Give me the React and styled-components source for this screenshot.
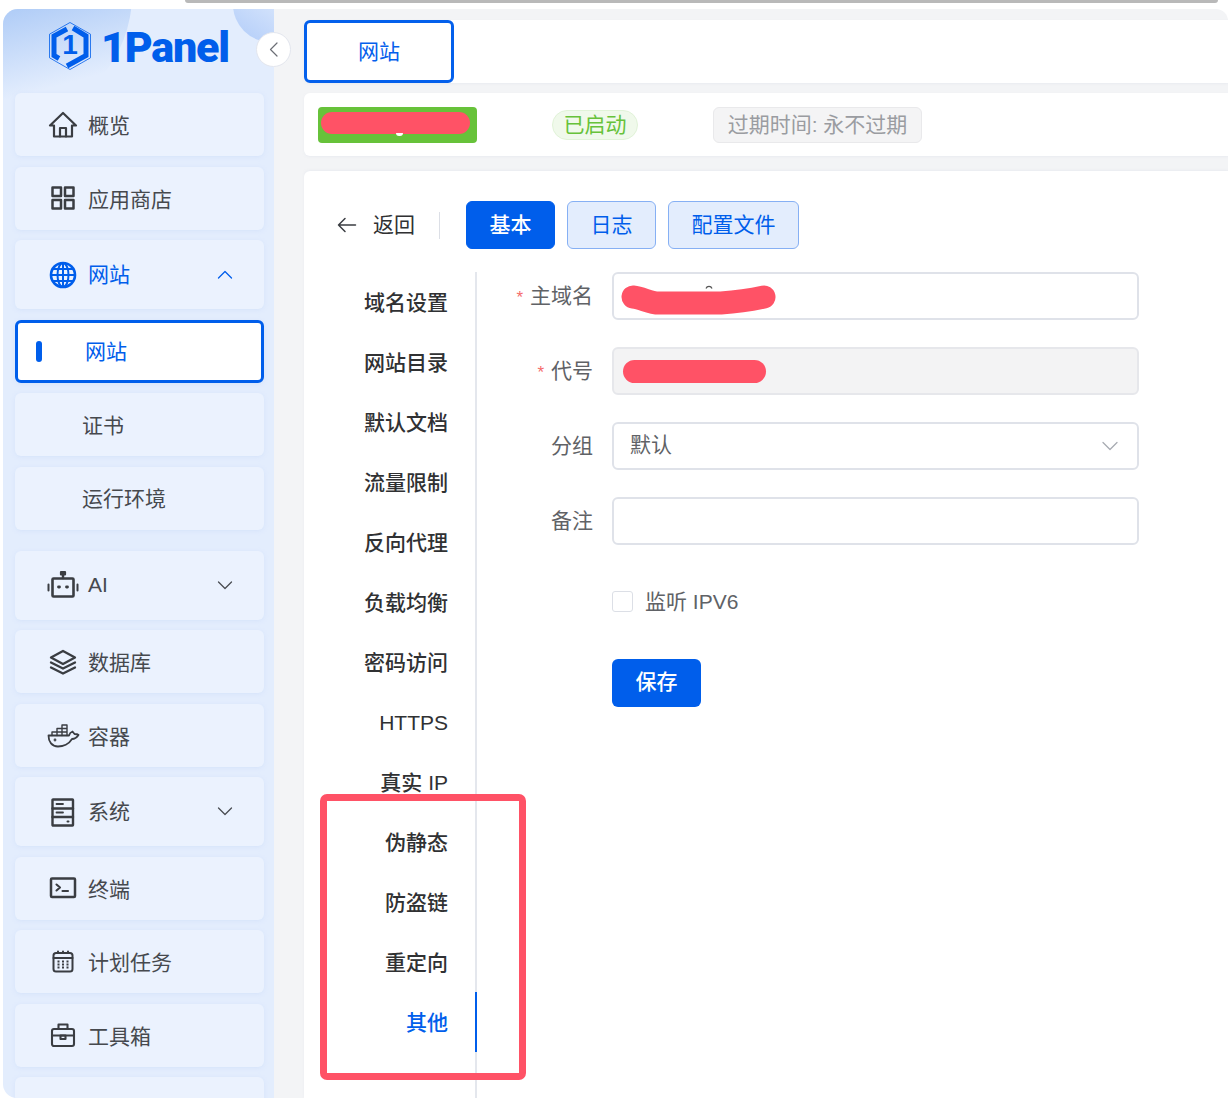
import styled, { createGlobalStyle } from "styled-components";

const GlobalStyle = createGlobalStyle`
  html, body {
    margin: 0;
    padding: 0;
    background: #fff;
    overflow: hidden;
  }
  * {
    box-sizing: border-box;
  }
  body {
    font-family: "Liberation Sans", "Noto Sans CJK SC", sans-serif;
    font-size: 21px;
    line-height: 1;
  }
`;

const Page = styled.div`
  position: relative;
  width: 1228px;
  height: 1098px;
  overflow: hidden;
  background: #fff;
`;

const TopStrip = styled.div`
  height: 8.5px;
  padding: 0 10px 0 185px;
`;

const WindowEdge = styled.div`
  height: 2.5px;
  background: #b9b9b9;
  border-radius: 0 0 6px 6px;
`;

const Shell = styled.div`
  display: flex;
  height: 1089.5px;
  padding-left: 3px;
`;

const Sidebar = styled.aside`
  position: relative;
  width: 271px;
  flex: none;
  padding: 0 10px 0 12px;
  background: #e3edfd;
  border-radius: 15px 0 0 14px;
  overflow: hidden;

  &::before {
    content: "";
    position: absolute;
    left: -95px;
    top: -135px;
    width: 224px;
    height: 240px;
    border-radius: 50%;
    background: linear-gradient(165deg, #a9c8f6 50%, #e3edfd 84%);
  }
  &::after {
    content: "";
    position: absolute;
    right: -34px;
    top: -42px;
    width: 75px;
    height: 75px;
    border-radius: 50%;
    background: linear-gradient(215deg, #e0ebfd 30%, #b7d0f9 90%);
  }
`;

const LogoRow = styled.div`
  position: relative;
  z-index: 1;
  display: flex;
  align-items: center;
  gap: 10px;
  height: 84.5px;
  padding: 0 0 9.5px 34px;
`;

const LogoText = styled.span`
  margin-top: 2px;
  font-family: Roboto, "Liberation Sans", sans-serif;
  font-size: 43px;
  font-weight: 900;
  letter-spacing: -1.2px;
  color: #005eeb;
  line-height: 1;
`;

const NavList = styled.nav`
  position: relative;
  z-index: 1;
  display: flex;
  flex-direction: column;
  gap: 10.5px;
`;

const SubMenu = styled.div`
  display: flex;
  flex-direction: column;
  gap: 10.5px;
  margin-bottom: 10.5px;
`;

const NavItem = styled.div`
  display: flex;
  align-items: center;
  flex: none;
  width: 249px;
  height: ${(props) => (props.$tall ? "69px" : "63px")};
  padding-left: 34px;
  padding-right: 32px;
  gap: 11px;
  border-radius: 6px;
  background: #ebf2fe;
  color: ${(props) => (props.$active ? "#005eeb" : "#46494e")};
  box-shadow: 0 1px 4px rgba(190, 210, 245, 0.35);
`;

const NavLabel = styled.span`
  flex: 1;
  margin-top: ${(props) => (props.$short ? "2px" : "0")};
  margin-bottom: ${(props) => (props.$latin ? "2px" : "0")};
`;

const SubItem = styled.div`
  display: flex;
  align-items: center;
  width: 249px;
  height: 63px;
  padding-left: 67px;
  padding-top: 1px;
  border-radius: 6px;
  background: #ebf2fe;
  color: #46494e;
  box-shadow: 0 1px 4px rgba(190, 210, 245, 0.35);
`;

const ActiveSubItem = styled(SubItem)`
  background: #fff;
  border: 3px solid #005eeb;
  padding-left: 18px;
  color: #005eeb;
`;

const ActiveMark = styled.span`
  width: 6px;
  height: 21px;
  margin-right: 43px;
  border-radius: 3px;
  background: #005eeb;
`;

const IconSvg = styled.svg`
  flex: none;
  overflow: visible;
  fill: none;
  stroke: ${(props) => props.$color || "#3a3d42"};
  stroke-width: ${(props) => props.$weight || 2.2};
  stroke-linecap: round;
  stroke-linejoin: round;
`;

const CollapseButton = styled.div`
  position: absolute;
  left: 256px;
  top: 32px;
  z-index: 3;
  display: flex;
  align-items: center;
  justify-content: center;
  width: 35px;
  height: 35px;
  border-radius: 50%;
  background: #fff;
  border: 1px solid #e3e6ee;
`;

const Main = styled.main`
  flex: 1;
  min-width: 0;
  display: flex;
  flex-direction: column;
  padding: 11.5px 0 0 30px;
  background: #f3f4f6;
  border-radius: 0 12px 0 0;
`;

const TabsCard = styled.div`
  display: flex;
  flex: none;
  height: 63px;
  background: #fff;
  border-radius: 6px 0 0 6px;
  box-shadow: 0 1px 2px rgba(226, 230, 238, 0.5);
`;

const ActiveTab = styled.div`
  display: flex;
  align-items: center;
  justify-content: center;
  width: 150px;
  height: 63px;
  border: 3px solid #0460ec;
  border-radius: 6px;
  color: #0460ec;
`;

const InfoCard = styled.div`
  display: flex;
  align-items: center;
  flex: none;
  gap: 75px;
  height: 63px;
  margin-top: 10px;
  padding-left: 14px;
  background: #fff;
  border-radius: 6px 0 0 6px;
  box-shadow: 0 1px 2px rgba(226, 230, 238, 0.5);
`;

const NameTag = styled.div`
  position: relative;
  width: 159px;
  height: 36px;
  padding: 5px 0 0 3px;
  background: #67c23a;
  border-radius: 4px;

  &::after {
    content: "";
    position: absolute;
    left: 78px;
    top: 26px;
    width: 7px;
    height: 3px;
    border-radius: 0 0 4px 4px;
    background: #fff;
  }
`;

const RedactPill = styled.div`
  width: ${(props) => props.$width}px;
  height: ${(props) => props.$height}px;
  margin-left: ${(props) => props.$left || 0}px;
  border-radius: 12px;
  background: #ff5266;
`;

const StatusTag = styled.div`
  display: flex;
  align-items: center;
  justify-content: center;
  width: 86px;
  height: 30px;
  border-radius: 15px;
  background: #f0f9eb;
  border: 1px solid #e1f3d8;
  color: #67c23a;
`;

const ExpireTag = styled.div`
  display: flex;
  align-items: center;
  justify-content: center;
  width: 209px;
  height: 36px;
  border-radius: 6px;
  background: #f4f4f5;
  border: 1px solid #e9e9eb;
  color: #9a9ca1;
`;

const ContentCard = styled.section`
  flex: 1;
  display: flex;
  flex-direction: column;
  min-height: 0;
  margin-top: 15px;
  padding-top: 30px;
  background: #fff;
  border-radius: 6px 0 0 0;
  box-shadow: 0 -1px 2px rgba(226, 230, 238, 0.5);
`;

const Toolbar = styled.div`
  display: flex;
  align-items: center;
  flex: none;
  height: 48px;
  padding-left: 33px;
`;

const BackText = styled.span`
  margin: 0 0 2px 16px;
  color: #303133;
`;

const ToolDivider = styled.span`
  width: 1px;
  height: 27px;
  margin: 0 26px 0 24px;
  background: #dcdfe6;
`;

const ToolButton = styled.div`
  display: flex;
  align-items: center;
  justify-content: center;
  width: ${(props) => props.$width || 89}px;
  height: 48px;
  margin-right: 12px;
  padding-bottom: 2px;
  border-radius: 6px;
  font-weight: ${(props) => (props.$primary ? 500 : 400)};
  color: ${(props) => (props.$primary ? "#fff" : "#005eeb")};
  background: ${(props) => (props.$primary ? "#005eeb" : "#e3edfd")};
  border: 1px solid ${(props) => (props.$primary ? "#005eeb" : "#86b0f4")};
`;

const Body = styled.div`
  flex: 1;
  display: flex;
  min-height: 0;
  margin-top: 23px;
`;

const SideTabs = styled.div`
  flex: none;
  width: 173px;
  border-right: 2px solid #e4e7ed;
`;

const SideTab = styled.div`
  position: relative;
  height: 60px;
  margin-right: -2px;
  padding-right: 29px;
  line-height: 61px;
  text-align: right;
  font-weight: 500;
  color: ${(props) => (props.$active ? "#005eeb" : "#303133")};

  ${(props) =>
    props.$active &&
    `&::after {
      content: "";
      position: absolute;
      right: 0;
      top: 0;
      width: 2px;
      height: 60px;
      background: #005eeb;
    }`}
`;

const Form = styled.div`
  display: flex;
  flex-direction: column;
  gap: 27px;
`;

const FormRow = styled.div`
  display: flex;
  gap: 19px;
  height: 48px;
`;

const FormLabel = styled.label`
  width: 116px;
  height: 48px;
  text-align: right;
  line-height: 47px;
  color: #606266;
`;

const Required = styled.span`
  margin-right: 7px;
  font-size: 17px;
  color: #f56c6c;
`;

const Field = styled.div`
  display: flex;
  align-items: center;
  width: 527px;
  height: 48px;
  border-radius: 6px;
  border: 2px solid #dcdfe6;
  background: ${(props) => (props.$disabled ? "#f3f3f4" : "#fff")};
  border-color: ${(props) => (props.$disabled ? "#e6e7eb" : "#dfe2e9")};
`;

const SelectValue = styled.span`
  flex: 1;
  padding: 0 0 3px 16px;
  color: #606266;
`;

const CheckRow = styled.div`
  display: flex;
  align-items: center;
  gap: 12px;
  height: 24px;
  margin: 17px 0 0 135px;
  color: #606266;
`;

const CheckBox = styled.span`
  width: 21px;
  height: 21px;
  border-radius: 3px;
  border: 1px solid #dcdfe6;
  background: #fff;
`;

const SaveButton = styled.div`
  display: flex;
  align-items: center;
  justify-content: center;
  width: 89px;
  height: 48px;
  margin: 19px 0 0 135px;
  padding-bottom: 3px;
  border-radius: 6px;
  background: #005eeb;
  color: #fff;
  font-weight: 500;
`;

const Callout = styled.div`
  position: absolute;
  left: 320px;
  top: 794px;
  width: 206px;
  height: 286px;
  border: 7px solid #ff5266;
  border-radius: 7px;
  z-index: 4;
`;

const Chevron = ({ up, color = "#4a4d52" }) => (
  <IconSvg width="14" height="9" viewBox="0 0 14 9" $color={color} $weight={1.3}>
    <path d={up ? "M0.5 8 L7 1.5 L13.5 8" : "M0.5 1 L7 7.5 L13.5 1"} />
  </IconSvg>
);

const Box = ({ children, ...rest }) => (
  <IconSvg width="28" height="28" viewBox="0 0 28 28" {...rest}>
    {children}
  </IconSvg>
);

const HomeIcon = () => (
  <Box>
    <path d="M1 14.5 L14 2 L27 14.5 H23 V25.5 H5 V14.5 Z" />
    <path d="M11 25.5 V17 H17 V25.5" />
  </Box>
);

const GridIcon = () => (
  <Box $weight={2.5}>
    <rect x="3.5" y="3.5" width="8.5" height="8.5" />
    <rect x="16" y="3.5" width="8.5" height="8.5" />
    <rect x="3.5" y="16" width="8.5" height="8.5" />
    <rect x="16" y="16" width="8.5" height="8.5" />
  </Box>
);

const GlobeIcon = () => (
  <Box $color="#005eeb" $weight={2}>
    <circle cx="14" cy="14" r="12" strokeWidth="2.6" />
    <ellipse cx="14" cy="14" rx="5.5" ry="12" />
    <path d="M14 2 V26 M2 14 H26 M3.8 8 H24.2 M3.8 20 H24.2" />
  </Box>
);

const BotIcon = () => (
  <Box>
    <rect x="3.5" y="7.5" width="21" height="18" rx="1" strokeWidth="2.6" />
    <path d="M14 2 V7" strokeWidth="2.4" />
    <rect x="12" y="1" width="4" height="2.5" fill="#3a3d42" />
    <path d="M-0.5 13.5 V19.5 M28.5 13.5 V19.5" strokeWidth="2" />
    <path d="M9.5 16 H10.5 M17.5 16 H18.5" strokeWidth="2.8" />
  </Box>
);

const LayersIcon = () => (
  <Box $weight={2.3}>
    <path d="M14 3 L26 9.5 L14 16 L2 9.5 Z" />
    <path d="M2 14.5 L14 20.5 L26 14.5" />
    <path d="M2 19.5 L14 25.5 L26 19.5" />
  </Box>
);

const DockerIcon = () => (
  <Box $weight={1.8}>
    <path d="M-0.5 14.5 H20 C20.5 12.5 22 11 23.5 10.5 L25.5 13 C27 13 28.5 13 29.5 14 C27.5 17 25.5 18 23 18 C20 23 14 25.5 9 25.5 C3 25.5 -0.5 21 -0.5 14.5 Z" />
    <path
      d="M3 11 H18 V14.5 M3 11 V14.5 M8 7.5 V14.5 M13 4 V14.5 M8 7.5 H18 M13 4 H18 V11"
      strokeWidth="1.4"
    />
    <circle cx="6" cy="19" r="0.5" />
  </Box>
);

const ServerIcon = () => (
  <Box $weight={2.4}>
    <rect x="3.5" y="1.5" width="20.5" height="26" rx="0.5" />
    <path d="M3.5 10.5 H24 M3.5 19 H24" />
    <path d="M7.5 6 H14 M7.5 14.5 H14" strokeWidth="1.8" />
    <path d="M18.5 23.5 H19.5" strokeWidth="2" />
  </Box>
);

const TerminalIcon = () => (
  <Box $weight={2.5}>
    <rect x="2" y="4.5" width="24" height="18.5" rx="1" />
    <path d="M7.5 10.5 L11 13.5 L7.5 16.5 M13.5 17 H19" strokeWidth="2.1" />
  </Box>
);

const CalendarIcon = () => (
  <Box $weight={2}>
    <rect x="4.5" y="5" width="19" height="18.5" rx="2.5" />
    <path d="M4.5 10 H23.5 M9 3.5 V5 M14 3.5 V5 M19 3.5 V5" />
    <path
      d="M8.5 13.5 H10.5 M13 13.5 H15 M17.5 13.5 H19.5 M8.5 16.5 H10.5 M13 16.5 H15 M17.5 16.5 H19.5 M8.5 19.5 H10.5 M13 19.5 H15 M17.5 19.5 H19.5"
      strokeWidth="1.8"
      strokeLinecap="butt"
    />
  </Box>
);

const ToolboxIcon = () => (
  <Box $weight={2.1}>
    <rect x="3" y="8" width="22" height="17" rx="2" />
    <path d="M9.5 8 V3.5 H18.5 V8" />
    <path d="M3 14.5 H25" />
    <rect x="11.5" y="14.5" width="5" height="3.5" />
  </Box>
);

const LogoMark = () => (
  <svg width="42" height="48" viewBox="0 0 42 48" style={{ flex: "none" }}>
    <polygon points="21,0.5 41.5,12.2 41.5,35.8 21,47.5 0.5,35.8 0.5,12.2" fill="none" stroke="#005eeb" strokeWidth="0.8" />
    <path d="M18 7 L5 14 V33.5 L10 36.5" fill="none" stroke="#005eeb" strokeWidth="5" />
    <path d="M24 6 L37 14 V33.5 L18 44" fill="none" stroke="#005eeb" strokeWidth="5" />
    <text x="21" y="32" textAnchor="middle" fontFamily="Liberation Sans" fontWeight="700" fontSize="28" fill="#005eeb">
      1
    </text>
  </svg>
);

const Scribble = () => (
  <svg width="155" height="30" viewBox="0 0 155 30" style={{ marginLeft: 7, marginTop: 7, flex: "none" }}>
    <path d="M85 3.5 A 3.2 3.2 0 0 1 91 3.5" fill="none" stroke="#555" strokeWidth="1.2" />
    <path
      d="M12 12 C 22 13 28 18 38 18 H 100 C 115 17 125 16 143 12"
      fill="none"
      stroke="#ff5266"
      strokeWidth="23"
      strokeLinecap="round"
      strokeLinejoin="round"
    />
  </svg>
);

const sideTabs = [
  "域名设置",
  "网站目录",
  "默认文档",
  "流量限制",
  "反向代理",
  "负载均衡",
  "密码访问",
  "HTTPS",
  "真实 IP",
  "伪静态",
  "防盗链",
  "重定向",
  "其他",
];

const App = () => {
  return (
    <Page>
      <GlobalStyle />
      <TopStrip>
        <WindowEdge />
      </TopStrip>
      <Shell>
        <Sidebar>
          <LogoRow>
            <LogoMark />
            <LogoText>1Panel</LogoText>
          </LogoRow>
          <NavList>
            <NavItem>
              <HomeIcon />
              <NavLabel $short>概览</NavLabel>
            </NavItem>
            <NavItem>
              <GridIcon />
              <NavLabel $short>应用商店</NavLabel>
            </NavItem>
            <NavItem $tall $active>
              <GlobeIcon />
              <NavLabel>网站</NavLabel>
              <Chevron up color="#005eeb" />
            </NavItem>
            <SubMenu>
              <ActiveSubItem>
                <ActiveMark />
                网站
              </ActiveSubItem>
              <SubItem>证书</SubItem>
              <SubItem>运行环境</SubItem>
            </SubMenu>
            <NavItem $tall>
              <BotIcon />
              <NavLabel $latin>AI</NavLabel>
              <Chevron />
            </NavItem>
            <NavItem>
              <LayersIcon />
              <NavLabel $short>数据库</NavLabel>
            </NavItem>
            <NavItem>
              <DockerIcon />
              <NavLabel $short>容器</NavLabel>
            </NavItem>
            <NavItem $tall>
              <ServerIcon />
              <NavLabel>系统</NavLabel>
              <Chevron />
            </NavItem>
            <NavItem>
              <TerminalIcon />
              <NavLabel $short>终端</NavLabel>
            </NavItem>
            <NavItem>
              <CalendarIcon />
              <NavLabel $short>计划任务</NavLabel>
            </NavItem>
            <NavItem>
              <ToolboxIcon />
              <NavLabel $short>工具箱</NavLabel>
            </NavItem>
            <NavItem />
          </NavList>
        </Sidebar>

        <Main>
          <TabsCard>
            <ActiveTab>网站</ActiveTab>
          </TabsCard>
          <InfoCard>
            <NameTag>
              <RedactPill $width={149} $height={22} />
            </NameTag>
            <StatusTag>已启动</StatusTag>
            <ExpireTag>过期时间: 永不过期</ExpireTag>
          </InfoCard>
          <ContentCard>
            <Toolbar>
              <IconSvg width="20" height="16" viewBox="0 0 20 16" $color="#3a3d42" $weight={1.5}>
                <path d="M1.5 8 H18.5 M8 1.5 L1.5 8 L8 14.5" />
              </IconSvg>
              <BackText>返回</BackText>
              <ToolDivider />
              <ToolButton $primary>基本</ToolButton>
              <ToolButton>日志</ToolButton>
              <ToolButton $width={131}>配置文件</ToolButton>
            </Toolbar>
            <Body>
              <SideTabs>
                {sideTabs.map((name) => (
                  <SideTab key={name} $active={name === "其他"}>
                    {name}
                  </SideTab>
                ))}
              </SideTabs>
              <Form>
                <FormRow>
                  <FormLabel>
                    <Required>*</Required>主域名
                  </FormLabel>
                  <Field>
                    <Scribble />
                  </Field>
                </FormRow>
                <FormRow>
                  <FormLabel>
                    <Required>*</Required>代号
                  </FormLabel>
                  <Field $disabled>
                    <RedactPill $width={143} $height={23} $left={9} />
                  </Field>
                </FormRow>
                <FormRow>
                  <FormLabel>分组</FormLabel>
                  <Field>
                    <SelectValue>默认</SelectValue>
                    <IconSvg
                      width="16"
                      height="10"
                      viewBox="0 0 16 10"
                      $color="#a8abb2"
                      $weight={1.3}
                      style={{ marginRight: 19 }}
                    >
                      <path d="M1 1.5 L8 8.5 L15 1.5" />
                    </IconSvg>
                  </Field>
                </FormRow>
                <FormRow>
                  <FormLabel>备注</FormLabel>
                  <Field />
                </FormRow>
                <CheckRow>
                  <CheckBox />
                  监听 IPV6
                </CheckRow>
                <SaveButton>保存</SaveButton>
              </Form>
            </Body>
          </ContentCard>
        </Main>
      </Shell>
      <CollapseButton>
        <IconSvg width="9" height="15" viewBox="0 0 9 15" $color="#6b6e75" $weight={1.2}>
          <path d="M8 1 L1.5 7.5 L8 14" />
        </IconSvg>
      </CollapseButton>
      <Callout />
    </Page>
  );
};

export default App;
